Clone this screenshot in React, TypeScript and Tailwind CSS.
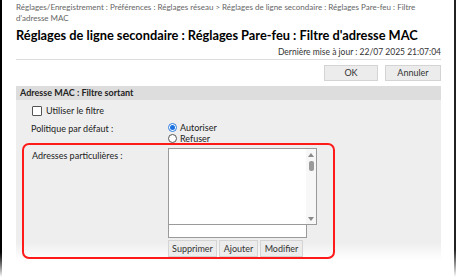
import React from "react";

export default function App() {
  const font = { fontFamily: 'Lato, "Noto Sans", sans-serif' };
  return (
    <div className="relative w-[456px] h-[277px] bg-white overflow-hidden text-[#222]" style={font}>
      <div className="absolute left-0 top-0 w-[2px] h-full bg-gradient-to-b from-black from-[90%] to-white" />
      <div className="absolute right-0 top-0 w-[2px] h-full bg-gradient-to-b from-[#222] from-[90%] to-white" />
      <div className="flex flex-col pl-[16px] pr-[15px]">
        <div className="pt-[2px] text-[8px] leading-[11px] text-[#666] whitespace-nowrap">
          Réglages/Enregistrement : Préférences : Réglages réseau &gt; Réglages de ligne secondaire : Réglages Pare-feu : Filtre
          <br />
          d'adresse MAC
        </div>
        <div className="mt-[3px] text-[12.8px] leading-[16px] font-bold text-black whitespace-nowrap">
          Réglages de ligne secondaire : Réglages Pare-feu : Filtre d'adresse MAC
        </div>
        <div className="mt-[4px] text-right text-[8.5px] leading-[11px] text-[#333] pb-[1px] border-b border-[#dcdcdc] whitespace-nowrap">
          Dernière mise à jour : 22/07 2025 21:07:04
        </div>
        <div className="flex justify-end gap-[7px] mt-[5px]">
          <button className="w-[54px] h-[16px] bg-[#ececec] border border-[#d4d4d4] text-[9px] text-[#333]">OK</button>
          <button className="w-[56px] h-[16px] bg-[#ececec] border border-[#d4d4d4] text-[9px] text-[#333]">Annuler</button>
        </div>
        <div className="mt-[5px] flex flex-col bg-gradient-to-b from-[#eeeeee] from-[90%] to-white h-[174px]">
          <div className="h-[14px] bg-[#dddddd] pl-[4px] text-[9px] leading-[14px] font-bold text-[#222]">
            Adresse MAC : Filtre sortant
          </div>
          <div className="flex items-center gap-[4px] pl-[16px] mt-[5px] h-[12px]">
            <span className="w-[10px] h-[10px] bg-white border border-[#555] rounded-[1px]" />
            <span className="text-[9px] leading-[12px]">Utiliser le filtre</span>
          </div>
          <div className="flex mt-[5px] pl-[15px]">
            <div className="w-[137px] text-[9px] leading-[12px] pt-[1px]">Politique par défaut :</div>
            <div className="flex flex-col">
              <div className="flex items-center gap-[3px] h-[11px]">
                <span className="w-[9px] h-[9px] rounded-full border border-[#2a7be0] bg-white flex items-center justify-center">
                  <span className="w-[5px] h-[5px] rounded-full bg-[#1a72e0]" />
                </span>
                <span className="text-[9px] leading-[11px]">Autoriser</span>
              </div>
              <div className="flex items-center gap-[3px] h-[11px]">
                <span className="w-[9px] h-[9px] rounded-full border border-[#555] bg-white" />
                <span className="text-[9px] leading-[11px]">Refuser</span>
              </div>
            </div>
          </div>
          <div className="ml-[6px] mt-[-1px] w-[313px] h-[116px] border-2 border-[#ff1a1a] rounded-[7px] flex pt-[3px] pl-[8px]">
            <div className="w-[136px] text-[9px] leading-[12px] pt-[2px]">Adresses particulières :</div>
            <div className="flex flex-col">
              <div className="w-[149px] h-[77px] bg-white border border-[#9a9a9a] flex justify-end">
                <div className="w-[10px] h-full bg-[#f7f7f7] flex flex-col items-center pt-[4px] pb-[3px]">
                  <svg width="6" height="4" viewBox="0 0 6 4"><path d="M0 4 L3 0 L6 4 Z" fill="#8a8a8a" /></svg>
                  <div className="w-[5px] h-[10px] rounded-[2px] bg-[#9a9a9a] mt-[4px]" />
                  <div className="flex-1" />
                  <svg width="6" height="4" viewBox="0 0 6 4"><path d="M0 0 L3 4 L6 0 Z" fill="#8a8a8a" /></svg>
                </div>
              </div>
              <div className="w-[139px] h-[13px] bg-white border border-[#9a9a9a] border-t-0" />
              <div className="flex gap-[2px] mt-[2px]">
                <button className="w-[49px] h-[17px] bg-[#ececec] border border-[#d4d4d4] text-[9px] text-[#333]">Supprimer</button>
                <button className="w-[39px] h-[17px] bg-[#ececec] border border-[#d4d4d4] text-[9px] text-[#333]">Ajouter</button>
                <button className="w-[43px] h-[17px] bg-[#ececec] border border-[#d4d4d4] text-[9px] text-[#333]">Modifier</button>
              </div>
            </div>
          </div>
        </div>
      </div>
    </div>
  );
}
